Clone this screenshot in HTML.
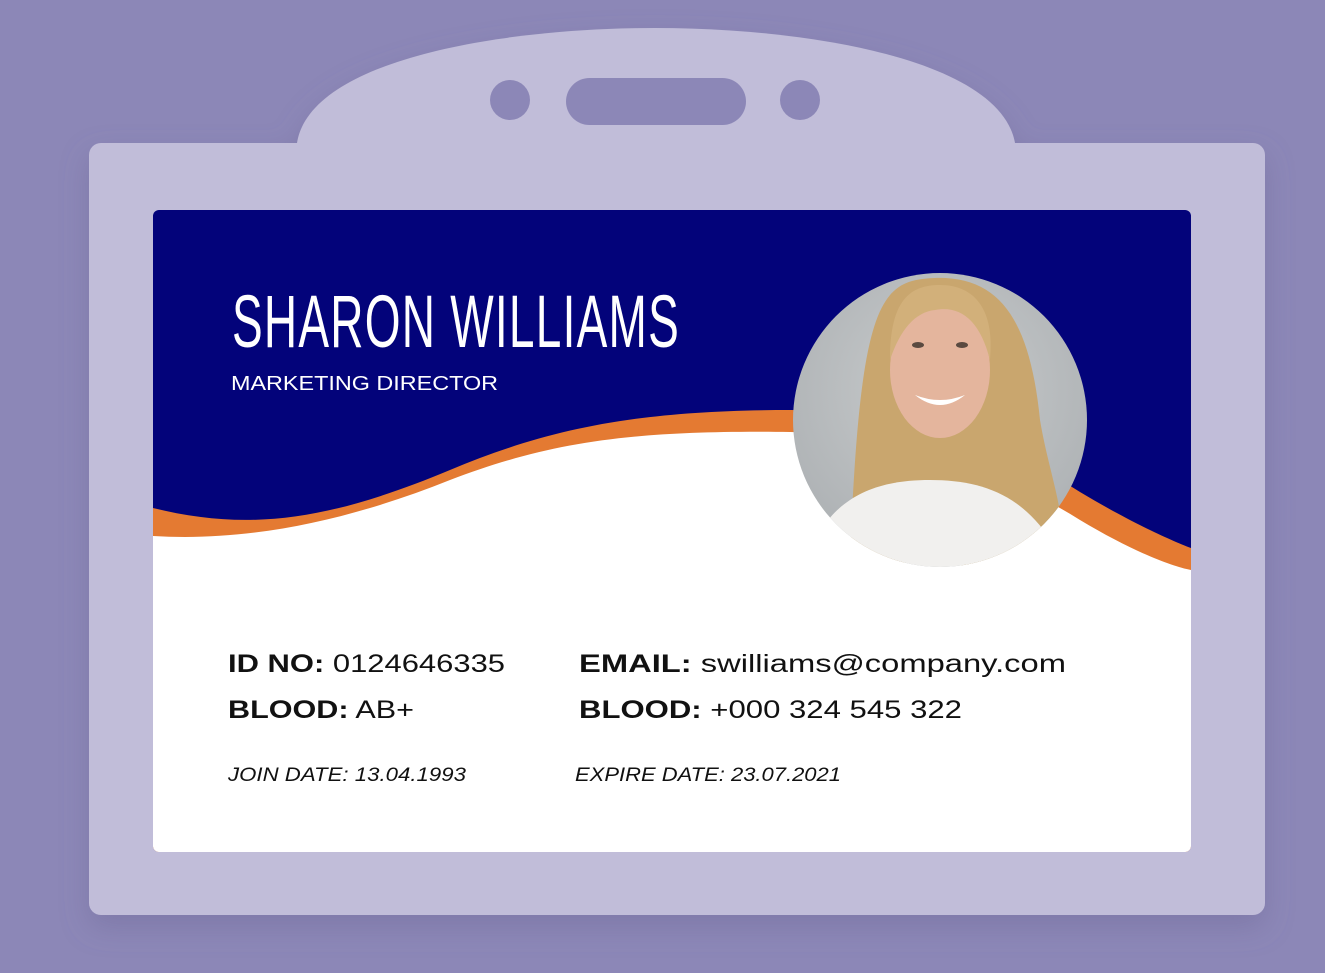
<!DOCTYPE html>
<html><head><meta charset="utf-8"><style>
html,body{margin:0;padding:0;background:#8c87b7;}
svg{display:block}
text{font-family:"Liberation Sans",sans-serif}
</style></head><body>
<svg width="1325" height="973" viewBox="0 0 1325 973" xmlns="http://www.w3.org/2000/svg">
<defs>
<clipPath id="card"><rect x="153" y="210" width="1038" height="642" rx="6"/></clipPath>
<clipPath id="ph"><circle cx="940" cy="420" r="147"/></clipPath>
<radialGradient id="bgp" cx="0.5" cy="0.4" r="0.7"><stop offset="0" stop-color="#c9cccd"/><stop offset="1" stop-color="#a9adb0"/></radialGradient>
<filter id="sh" x="-10%" y="-10%" width="120%" height="130%"><feDropShadow dx="0" dy="12" stdDeviation="14" flood-color="#6d6898" flood-opacity="0.45"/></filter>
</defs>
<rect width="1325" height="973" fill="#8c87b7"/>
<g filter="url(#sh)">
<path d="M297,143 C310,60 500,28 655,28 C810,28 1000,60 1015,143 Z" fill="#c1bdd9"/>
<rect x="89" y="143" width="1176" height="772" rx="12" fill="#c1bdd9"/>
</g>
<circle cx="510" cy="100" r="20" fill="#8c87b7"/>
<rect x="566" y="78" width="180" height="47" rx="23.5" fill="#8c87b7"/>
<circle cx="800" cy="100" r="20" fill="#8c87b7"/>
<g clip-path="url(#card)">
<rect x="153" y="210" width="1038" height="642" fill="#03037a"/>
<path d="M153,508 C250,532 330,520 450,470 C550,428 640,410 790,410 C900,410 1000,440 1080,492 C1130,522 1170,540 1191,548 L1191,852 L153,852 Z" fill="#e47a32"/>
<path d="M153,536 C250,542 350,520 450,480 C550,442 630,430 790,432 C900,434 1000,470 1080,520 C1130,550 1170,566 1191,570 L1191,852 L153,852 Z" fill="#ffffff"/>
</g>
<g clip-path="url(#ph)">
<rect x="790" y="270" width="300" height="300" fill="url(#bgp)"/>
<path d="M850,560 C860,300 880,280 935,278 C1000,276 1030,320 1040,420 C1050,480 1070,520 1060,570 Z" fill="#c9a66e"/>
<path d="M800,580 C820,500 870,480 930,480 C990,480 1040,500 1070,580 Z" fill="#f1f0ee"/>
<ellipse cx="940" cy="370" rx="50" ry="68" fill="#e4b59d"/>
<path d="M890,360 C890,300 910,285 940,285 C975,285 995,310 990,360 C980,320 960,305 935,310 C915,312 900,330 890,360 Z" fill="#d2b07a"/>
<path d="M915,395 Q940,415 965,395 Q940,405 915,395 Z" fill="#ffffff"/>
<ellipse cx="918" cy="345" rx="6" ry="3" fill="#5a4a40"/>
<ellipse cx="962" cy="345" rx="6" ry="3" fill="#5a4a40"/>
</g>
<text x="232" y="347" font-size="74" fill="#ffffff" textLength="448" lengthAdjust="spacingAndGlyphs" letter-spacing="2">SHARON WILLIAMS</text>
<text x="231" y="390" font-size="20" fill="#ffffff" textLength="267" lengthAdjust="spacingAndGlyphs">MARKETING DIRECTOR</text>
<g font-size="25" fill="#111">
<text x="228" y="672" textLength="277" lengthAdjust="spacingAndGlyphs"><tspan font-weight="bold">ID NO:</tspan> 0124646335</text>
<text x="228" y="718" textLength="186" lengthAdjust="spacingAndGlyphs"><tspan font-weight="bold">BLOOD:</tspan> AB+</text>
<text x="579" y="672" textLength="487" lengthAdjust="spacingAndGlyphs"><tspan font-weight="bold">EMAIL:</tspan> swilliams@company.com</text>
<text x="579" y="718" textLength="383" lengthAdjust="spacingAndGlyphs"><tspan font-weight="bold">BLOOD:</tspan> +000 324 545 322</text>
</g>
<g font-size="19" font-style="italic" fill="#111">
<text x="228" y="781" textLength="238" lengthAdjust="spacingAndGlyphs">JOIN DATE: 13.04.1993</text>
<text x="575" y="781" textLength="266" lengthAdjust="spacingAndGlyphs">EXPIRE DATE: 23.07.2021</text>
</g>
</svg>
</body></html>
